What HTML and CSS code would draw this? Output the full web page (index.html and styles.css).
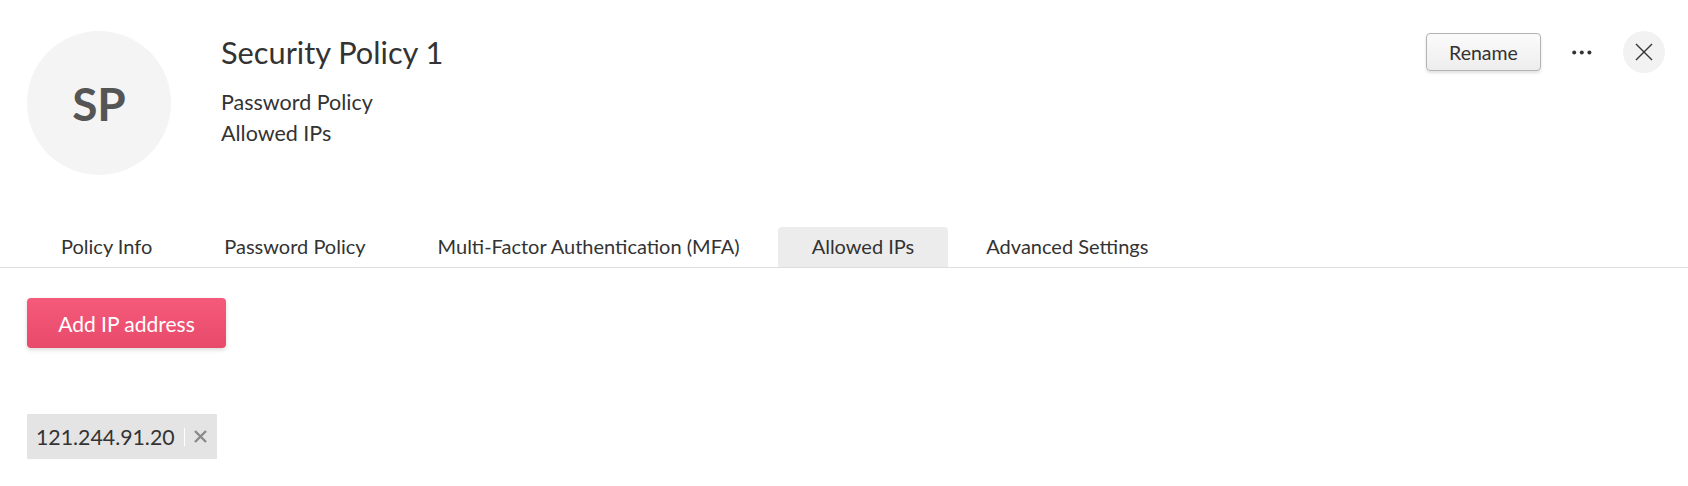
FILE: index.html
```html
<!DOCTYPE html>
<html lang="en">
<head>
<meta charset="utf-8">
<title>Security Policy 1</title>
<link rel="stylesheet" href="styles.css">
</head>
<body>
<div class="page">
  <header class="header">
    <div class="avatar">SP</div>
    <div class="info">
      <h1 class="title">Security Policy 1</h1>
      <div class="sub">Password Policy</div>
      <div class="sub">Allowed IPs</div>
    </div>
    <div class="actions">
      <button class="btn-rename">Rename</button>
      <button class="btn-more" aria-label="More">
        <svg width="20" height="5" viewBox="0 0 20 5"><circle cx="2.2" cy="2.5" r="2" fill="#333"/><circle cx="9.8" cy="2.5" r="2" fill="#333"/><circle cx="17.4" cy="2.5" r="2" fill="#333"/></svg>
      </button>
      <button class="btn-close" aria-label="Close">
        <svg width="18" height="18" viewBox="0 0 18 18"><path d="M1 1L17 17M17 1L1 17" stroke="#333" stroke-width="1.4" fill="none"/></svg>
      </button>
    </div>
  </header>

  <nav class="tabs">
    <div class="tab">Policy Info</div>
    <div class="tab">Password Policy</div>
    <div class="tab">Multi-Factor Authentication (MFA)</div>
    <div class="tab active">Allowed IPs</div>
    <div class="tab">Advanced Settings</div>
  </nav>

  <section class="content">
    <button class="btn-add">Add IP address</button>
    <div class="chips">
      <div class="chip">
        <span class="chip-text">121.244.91.20</span>
        <span class="chip-sep"></span>
        <svg class="chip-x" width="15" height="15" viewBox="0 0 15 15"><path d="M2 2L13 13M13 2L2 13" stroke="#8a8a8a" stroke-width="2.4" fill="none"/></svg>
      </div>
    </div>
  </section>
</div>
</body>
</html>
```

FILE: styles.css
```css
* { box-sizing: border-box; }
html, body { margin: 0; padding: 0; background: #fff; }
body {
  font-family: Lato, "Open Sans", "Liberation Sans", sans-serif;
  color: #333;
  font-size: 20px;
}
button { font-family: inherit; }

.header {
  display: flex;
  align-items: flex-start;
  padding: 31px 23px 0 27px;
}
.avatar {
  width: 144px;
  height: 144px;
  border-radius: 50%;
  background: #f4f4f4;
  color: #555;
  font-weight: 700;
  font-size: 46px;
  display: flex;
  align-items: center;
  justify-content: center;
  flex: none;
}
.info {
  margin-left: 50px;
  margin-top: 2px;
  flex: 1;
}
.title {
  margin: 0 0 14px;
  font-size: 30.75px;
  font-weight: 400;
  line-height: 40px;
  color: #333;
}
.sub {
  font-size: 21.5px;
  line-height: 31px;
}
.actions {
  display: flex;
  align-items: center;
  height: 42px;
}
.btn-rename {
  width: 115px;
  height: 38px;
  font-size: 19.5px;
  color: #333;
  background: linear-gradient(#fbfbfb, #ededed);
  border: 1px solid #b3b3b3;
  border-radius: 4px;
  box-shadow: 0 2px 3px rgba(0,0,0,0.12);
  padding: 0;
}
.btn-more {
  margin-left: 31px;
  width: 20px;
  height: 20px;
  padding: 0;
  border: 0;
  background: none;
  display: flex;
  align-items: center;
  justify-content: center;
}
.btn-close {
  margin-left: 31px;
  width: 42px;
  height: 42px;
  border-radius: 50%;
  border: 0;
  padding: 0;
  background: #f2f2f2;
  display: flex;
  align-items: center;
  justify-content: center;
}

.tabs {
  display: flex;
  gap: 4px;
  margin-top: 52px;
  padding-left: 27px;
  border-bottom: 1px solid #dedede;
}
.tab {
  padding: 0 34px;
  height: 40px;
  line-height: 38px;
  font-size: 20px;
  color: #333;
  border-radius: 4px 4px 0 0;
  white-space: nowrap;
}
.tab.active {
  background: #ececec;
}

.content {
  padding: 30px 27px 0;
}
.btn-add {
  display: block;
  width: 199px;
  height: 50px;
  padding: 0;
  border: 0;
  border-radius: 4px;
  color: #fff;
  font-size: 21px;
  background: linear-gradient(#f65a7b, #e74a6b);
  box-shadow: 0 2px 4px rgba(0,0,0,0.15);
}
.chips {
  margin-top: 66px;
  display: flex;
}
.chip {
  display: flex;
  align-items: center;
  height: 45px;
  padding: 0 9px;
  background: #e4e4e4;
}
.chip-text {
  font-size: 21.3px;
  color: #333;
}
.chip-sep {
  width: 1px;
  height: 18px;
  background: #fff;
  margin: 0 8px 0 9px;
}
.chip-x { display: block; }
```
